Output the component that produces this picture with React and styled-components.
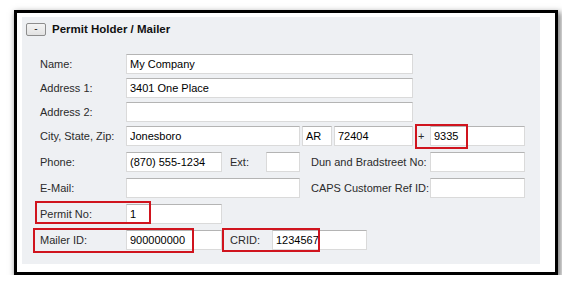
import React from "react";
import styled, { createGlobalStyle } from "styled-components";

const Global = createGlobalStyle`
    html, body {
        margin:0;
        padding:0;
        background:#ffffff;
    }
    body {
        font-family:"Liberation Sans", Arial, sans-serif;
    }
`;

/* 검은 테두리 + 그림자 액자 */
const Frame = styled.div`
    margin:10px 0 0 14px;
    width:528px;
    height:253px;
    border:3px solid #000;
    background:#fff;
    padding:4px 5px 2px 5px;
    box-sizing:content-box;
    box-shadow:2px 3px 6px 1px rgba(0,0,0,0.5);
`;

const Panel = styled.div`
    position:relative;
    box-sizing:border-box;
    width:518px;
    height:247px;
    background:#eef0f3;
    padding:5px 4px;
`;

const Header = styled.div`
    display:flex;
    align-items:center;
    gap:6px;
    height:14px;
`;

const Toggle = styled.div`
    box-sizing:border-box;
    width:20px;
    height:13px;
    border:1px solid #8d8d8d;
    border-radius:2px;
    background:linear-gradient(#f4f4f4,#e2e2e2);
    display:flex;
    align-items:center;
    justify-content:center;
    font-size:10px;
    line-height:1;
    color:#222;
`;

const Title = styled.div`
    font-size:11.5px;
    font-weight:bold;
    color:#111;
`;

const Rows = styled.div`
    margin-top:18px;
    padding-left:14px;
    display:flex;
    flex-direction:column;
`;

const Row = styled.div`
    display:flex;
    align-items:center;
    height:20px;
    margin-bottom:${p => (p.$tight ? "4px" : "6px")};
`;

const Label = styled.div`
    box-sizing:border-box;
    width:${p => p.$w}px;
    padding-left:${p => p.$pad || 0}px;
    font-size:11px;
    color:#2b2b2b;
    white-space:nowrap;
`;

const Field = styled.input`
    box-sizing:border-box;
    width:${p => p.$w}px;
    height:20px;
    margin-right:${p => p.$mr || 0}px;
    padding:0 3px;
    border:1px solid #dadada;
    border-top-color:#b4b4b4;
    background:#fff;
    font-family:"Liberation Sans", Arial, sans-serif;
    font-size:11px;
    color:#000;
    outline:none;
`;

// 설명용 빨간 강조 박스 (내용 위에 겹침)
const Mark = styled.div`
    position:absolute;
    box-sizing:border-box;
    border:2px solid #d0141e;
    pointer-events:none;
`;

const marks = [
    { left: 393, top: 107, width: 53, height: 25 },
    { left: 13, top: 184, width: 116, height: 23 },
    { left: 11, top: 211, width: 161, height: 25 },
    { left: 200, top: 211, width: 98, height: 24 },
];

const App = () => {
    return (
        <>
            <Global />
            <Frame>
                <Panel>
                    <Header>
                        <Toggle>-</Toggle>
                        <Title>Permit Holder / Mailer</Title>
                    </Header>
                    <Rows>
                        <Row $tight>
                            <Label $w={86}>Name:</Label>
                            <Field $w={287} defaultValue="My Company" readOnly />
                        </Row>
                        <Row $tight>
                            <Label $w={86}>Address 1:</Label>
                            <Field $w={287} defaultValue="3401 One Place" readOnly />
                        </Row>
                        <Row $tight>
                            <Label $w={86}>Address 2:</Label>
                            <Field $w={287} defaultValue="" readOnly />
                        </Row>
                        <Row>
                            <Label $w={86}>City, State, Zip:</Label>
                            <Field $w={174} $mr={2} defaultValue="Jonesboro" readOnly />
                            <Field $w={30} $mr={2} defaultValue="AR" readOnly />
                            <Field $w={79} defaultValue="72404" readOnly />
                            <Label $w={17} $pad={5}>+</Label>
                            <Field $w={95} defaultValue="9335" readOnly />
                        </Row>
                        <Row>
                            <Label $w={86}>Phone:</Label>
                            <Field $w={96} defaultValue="(870) 555-1234" readOnly />
                            <Label $w={44} $pad={8}>Ext:</Label>
                            <Field $w={34} defaultValue="" readOnly />
                            <Label $w={130} $pad={11}>Dun and Bradstreet No:</Label>
                            <Field $w={95} defaultValue="" readOnly />
                        </Row>
                        <Row>
                            <Label $w={86}>E-Mail:</Label>
                            <Field $w={174} defaultValue="" readOnly />
                            <Label $w={130} $pad={11}>CAPS Customer Ref ID:</Label>
                            <Field $w={95} defaultValue="" readOnly />
                        </Row>
                        <Row>
                            <Label $w={86}>Permit No:</Label>
                            <Field $w={96} defaultValue="1" readOnly />
                        </Row>
                        <Row>
                            <Label $w={86}>Mailer ID:</Label>
                            <Field $w={96} defaultValue="900000000" readOnly />
                            <Label $w={50} $pad={8}>CRID:</Label>
                            <Field $w={95} defaultValue="1234567" readOnly />
                        </Row>
                    </Rows>
                    {marks.map((m, i) => (
                        <Mark key={i} style={{ left: m.left, top: m.top, width: m.width, height: m.height }} />
                    ))}
                </Panel>
            </Frame>
        </>
    );
};

export default App;
